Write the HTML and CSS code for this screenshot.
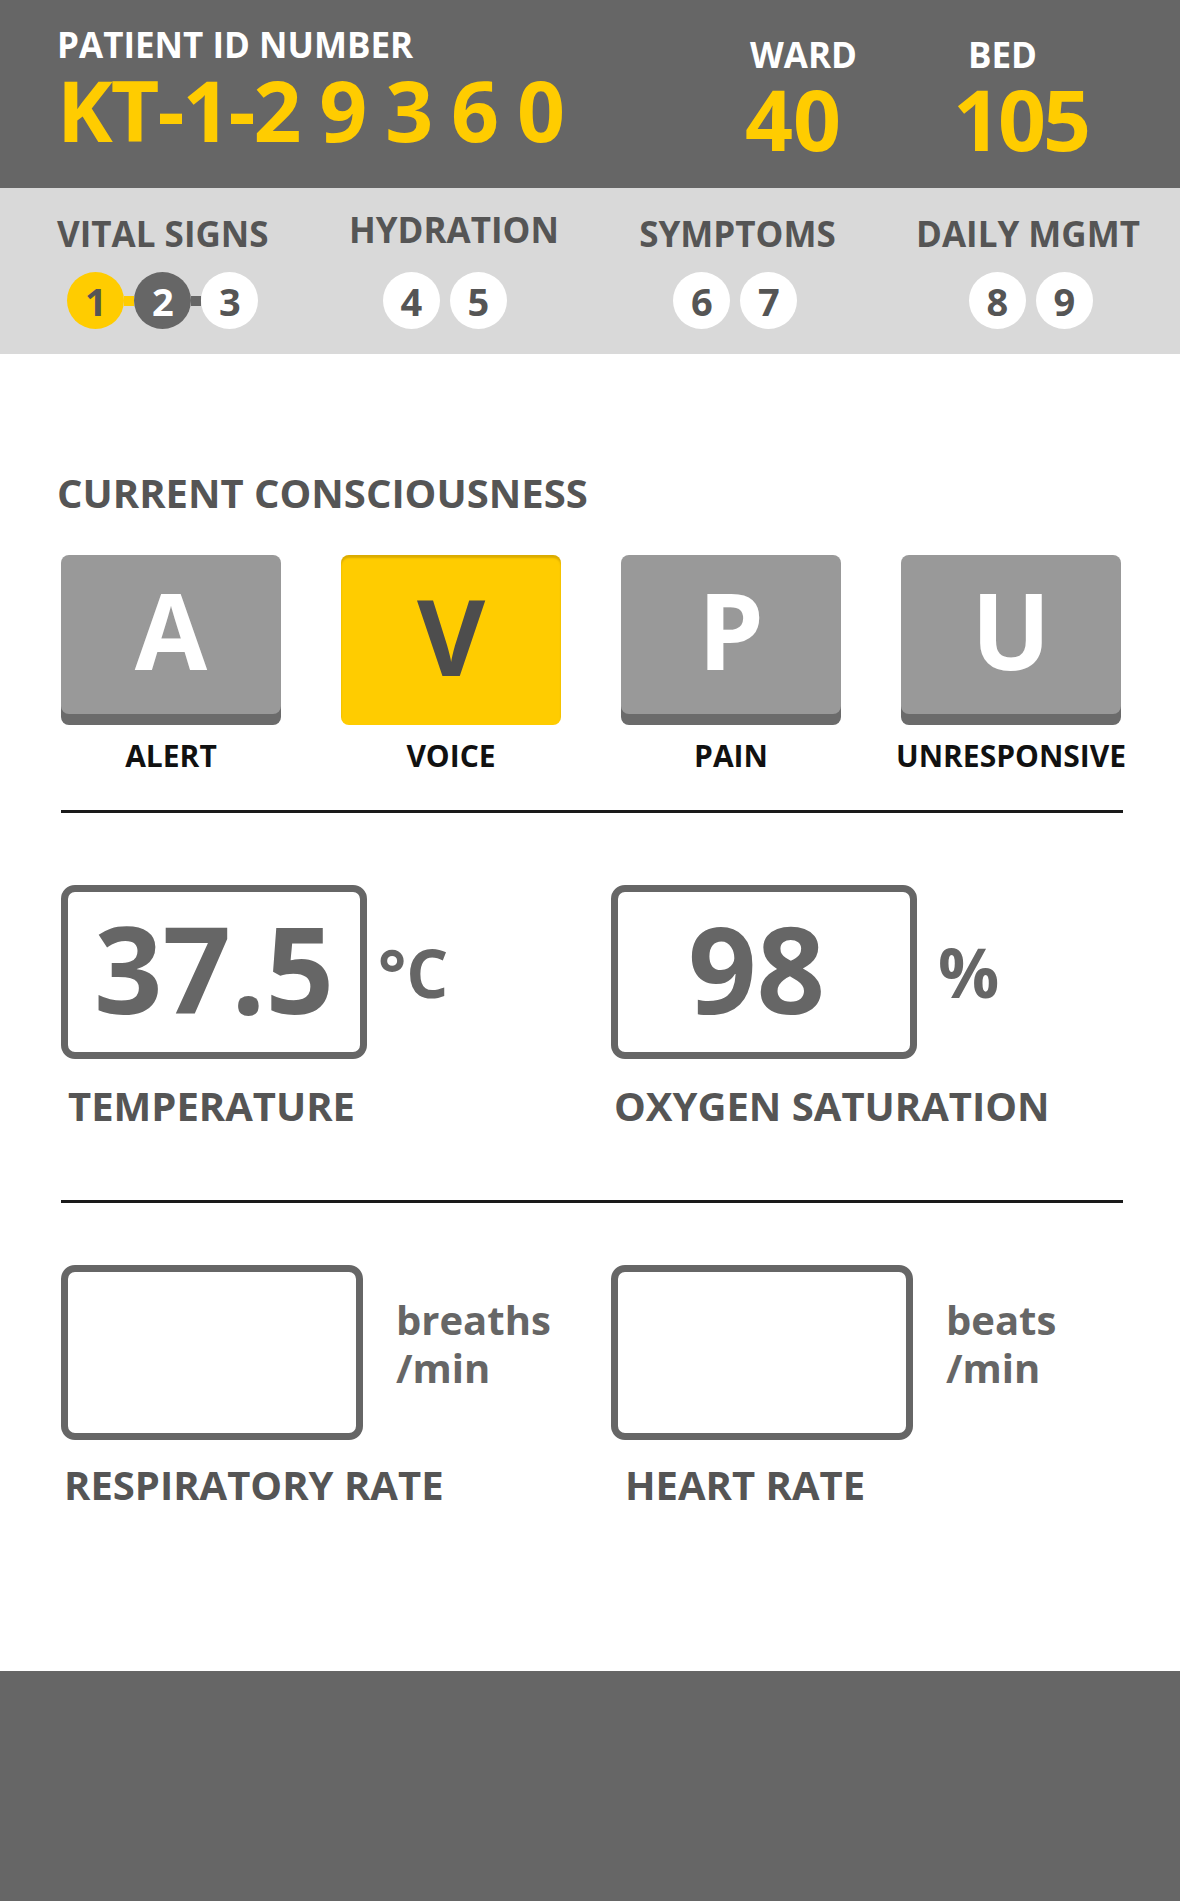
FILE: index.html
```html
<!DOCTYPE html>
<html lang="en">
<head>
<meta charset="utf-8">
<title>Patient Vital Signs</title>
<link rel="stylesheet" href="styles.css">
</head>
<body>
<div class="page">
  <header class="top">
    <div class="pid">
      <div class="pid-label">PATIENT ID NUMBER</div>
      <div class="pid-value">KT-1-2 9 3 6 0</div>
    </div>
    <div class="loc ward">
      <div class="loc-label">WARD</div>
      <div class="loc-value">40</div>
    </div>
    <div class="loc bed">
      <div class="loc-label">BED</div>
      <div class="loc-value">105</div>
    </div>
  </header>

  <nav class="nav">
    <div class="nav-item">
      <div class="nav-title">VITAL SIGNS</div>
      <div class="steps">
        <div class="step done">1</div>
        <div class="link yellow"></div>
        <div class="step current">2</div>
        <div class="link dark"></div>
        <div class="step">3</div>
      </div>
    </div>
    <div class="nav-item">
      <div class="nav-title raised">HYDRATION</div>
      <div class="steps steps-left">
        <div class="step">4</div>
        <div class="link"></div>
        <div class="step">5</div>
      </div>
    </div>
    <div class="nav-item">
      <div class="nav-title">SYMPTOMS</div>
      <div class="steps steps-slight-left">
        <div class="step">6</div>
        <div class="link"></div>
        <div class="step">7</div>
      </div>
    </div>
    <div class="nav-item">
      <div class="nav-title">DAILY MGMT</div>
      <div class="steps steps-right">
        <div class="step">8</div>
        <div class="link"></div>
        <div class="step">9</div>
      </div>
    </div>
  </nav>

  <main class="main">
    <h2 class="section-title">CURRENT CONSCIOUSNESS</h2>
    <div class="avpu">
      <div class="avpu-item">
        <div class="key">A</div>
        <div class="key-label">ALERT</div>
      </div>
      <div class="avpu-item">
        <div class="key selected">V</div>
        <div class="key-label">VOICE</div>
      </div>
      <div class="avpu-item">
        <div class="key">P</div>
        <div class="key-label">PAIN</div>
      </div>
      <div class="avpu-item">
        <div class="key">U</div>
        <div class="key-label">UNRESPONSIVE</div>
      </div>
    </div>

    <div class="rule"></div>

    <div class="vitals first">
      <div class="vital">
        <div class="vital-row">
          <div class="box">37.5</div>
          <div class="unit unit-c">°C</div>
        </div>
        <div class="vital-label label-temp">TEMPERATURE</div>
      </div>
      <div class="vital">
        <div class="vital-row">
          <div class="box box-o2">98</div>
          <div class="unit unit-pct">%</div>
        </div>
        <div class="vital-label label-o2">OXYGEN SATURATION</div>
      </div>
    </div>

    <div class="rule rule-second"></div>

    <div class="vitals second">
      <div class="vital">
        <div class="vital-row top-aligned">
          <div class="box empty"></div>
          <div class="unit unit-rate">breaths<br>/min</div>
        </div>
        <div class="vital-label label-resp">RESPIRATORY RATE</div>
      </div>
      <div class="vital">
        <div class="vital-row top-aligned">
          <div class="box empty"></div>
          <div class="unit unit-rate unit-beats">beats<br>/min</div>
        </div>
        <div class="vital-label label-heart">HEART RATE</div>
      </div>
    </div>
  </main>

  <footer class="footer"></footer>
</div>
</body>
</html>
```

FILE: styles.css
```css
* {
  box-sizing: border-box;
}

body {
  margin: 0;
  background: #ffffff;
  font-family: "Open Sans", "DejaVu Sans", sans-serif;
  font-weight: 700;
}

.page {
  width: 1180px;
}

/* ---------- header ---------- */
.top {
  height: 188px;
  background: #666666;
  display: grid;
  grid-template-columns: 688px 204px 1fr;
  padding: 27px 0 0 57px;
}

.pid-label {
  font-size: 35px;
  line-height: 1;
  color: #ffffff;
  white-space: nowrap;
}

.pid-value {
  font-size: 84px;
  line-height: 1;
  color: #ffcc00;
  margin-top: 6px;
  letter-spacing: -2px;
  white-space: nowrap;
}

.loc {
  padding-top: 10px;
}

.loc-label {
  font-size: 35px;
  line-height: 1;
  color: #ffffff;
}

.loc-value {
  font-size: 84px;
  line-height: 1;
  color: #ffcc00;
  margin-top: 5px;
}

.ward .loc-label {
  margin-left: 5px;
}

.bed .loc-label {
  margin-left: 19px;
}

.bed .loc-value {
  letter-spacing: -3px;
  margin-left: 4px;
}

/* ---------- step navigation ---------- */
.nav {
  height: 166px;
  background: #d9d9d9;
  display: flex;
  justify-content: space-between;
  padding: 28px 40px 0 57px;
}

.nav-item {
  display: flex;
  flex-direction: column;
  align-items: center;
}

.nav-title {
  font-size: 35px;
  line-height: 1;
  color: #555555;
  margin-bottom: 21px;
  white-space: nowrap;
}

.nav-title.raised {
  margin-top: -4px;
  margin-bottom: 25px;
}

.steps {
  display: flex;
  align-items: center;
}

.steps-left {
  margin-right: 18px;
}

.steps-slight-left {
  margin-right: 4px;
}

.steps-right {
  margin-left: 6px;
}

.step {
  width: 57px;
  height: 57px;
  border-radius: 50%;
  background: #ffffff;
  color: #555555;
  font-size: 38px;
  line-height: 1;
  display: flex;
  align-items: center;
  justify-content: center;
}

.step.done {
  background: #ffcc00;
}

.step.current {
  background: #666666;
  color: #ffffff;
}

.link {
  width: 10px;
  height: 10px;
}

.link.yellow {
  background: #ffcc00;
}

.link.dark {
  background: #666666;
}

/* ---------- main ---------- */
.main {
  height: 1317px;
  padding-top: 119px;
}

.section-title {
  margin: 0 0 42px 57px;
  font-size: 40px;
  line-height: 1;
  font-weight: 700;
  color: #555555;
}

.avpu {
  display: grid;
  grid-template-columns: repeat(4, 220px);
  column-gap: 60px;
  margin-left: 61px;
}

.avpu-item {
  display: flex;
  flex-direction: column;
  align-items: center;
}

.key {
  width: 220px;
  height: 159px;
  margin-bottom: 11px;
  background: #999999;
  border-radius: 8px;
  box-shadow: 0 11px 0 #6b6b6b;
  display: flex;
  align-items: center;
  justify-content: center;
  padding-bottom: 10px;
  font-size: 105px;
  line-height: 1;
  color: #ffffff;
}

.key.selected {
  height: 170px;
  margin-bottom: 0;
  background: #ffcc00;
  box-shadow: inset 0 3px 2px rgba(150, 110, 0, 0.35);
  color: #4d4d4d;
}

.key-label {
  margin-top: 16px;
  font-size: 30px;
  line-height: 1;
  color: #111111;
  white-space: nowrap;
}

.rule {
  height: 3px;
  background: #1a1a1a;
  margin: 39px 57px 0 61px;
}

.rule-second {
  margin-top: 74px;
}

.vitals {
  display: grid;
  grid-template-columns: 550px 550px;
  margin-left: 61px;
}

.vitals.first {
  margin-top: 72px;
}

.vitals.second {
  margin-top: 62px;
}

.vital-row {
  display: flex;
  align-items: center;
}

.vital-row.top-aligned {
  align-items: flex-start;
}

.box {
  width: 306px;
  height: 174px;
  border: 7px solid #666666;
  border-radius: 14px;
  display: flex;
  align-items: center;
  justify-content: center;
  padding-bottom: 9px;
  font-size: 120px;
  line-height: 1;
  color: #666666;
}

.box.box-o2 {
  padding-right: 15px;
}

.box.empty {
  height: 175px;
  width: 302px;
}

.unit {
  color: #666666;
  line-height: 1;
}

.unit-c {
  font-size: 66px;
  margin-left: 11px;
}

.unit-pct {
  font-size: 68px;
  margin-left: 21px;
}

.unit-rate {
  font-size: 40px;
  line-height: 48px;
  margin-top: 31px;
  margin-left: 33px;
}

.unit-beats {
  margin-left: 33px;
}

.vital-label {
  margin-top: 27px;
  font-size: 40px;
  line-height: 1;
  color: #555555;
  white-space: nowrap;
}

.label-temp {
  margin-left: 7px;
}

.label-o2 {
  margin-left: 3px;
}

.label-resp {
  margin-top: 25px;
  margin-left: 3px;
}

.label-heart {
  margin-top: 25px;
  margin-left: 14px;
}

/* ---------- footer ---------- */
.footer {
  height: 230px;
  background: #666666;
}
```
